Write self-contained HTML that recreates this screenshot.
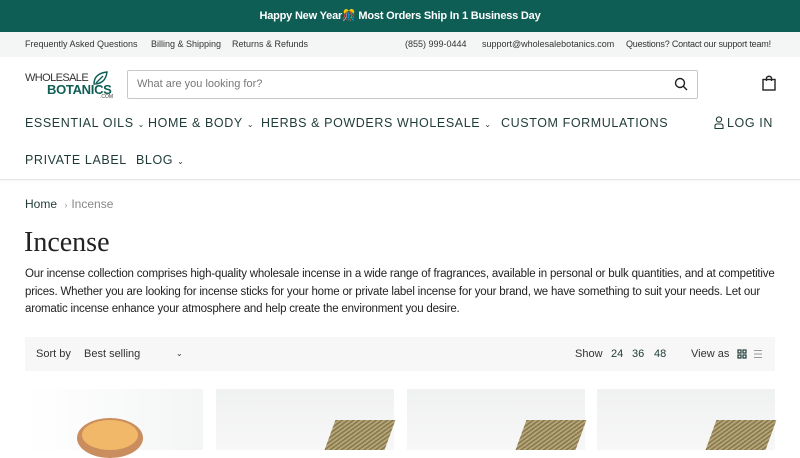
<!DOCTYPE html>
<html><head><meta charset="utf-8"><style>
*{margin:0;padding:0;box-sizing:border-box}
body{width:800px;height:450px;overflow:hidden;background:#fff;font-family:"Liberation Sans",sans-serif;color:#222;position:relative}
.a{position:absolute;white-space:nowrap}
.top{left:0;top:0;width:800px;height:32px;background:#0f5e55;color:#fff;font-weight:bold;font-size:11px;text-align:center;line-height:32px;letter-spacing:-0.2px}
.sub{left:0;top:32px;width:800px;height:25px;background:#f3f6f5;font-size:9px;color:#333;line-height:25px}
.nav{font-size:12.5px;letter-spacing:0.6px;color:#1f3b38}
.car{font-size:8px;margin-left:4px}
.desc{position:absolute;left:25px;width:760px;font-size:11.5px;color:#222;letter-spacing:-0.2px;white-space:nowrap}
.card{position:absolute;top:389px;width:178px;height:61px;background:linear-gradient(180deg,#f0f1f1,#f7f7f7)}
</style></head><body>
<div class="a top">Happy New Year🎊 Most Orders Ship In 1 Business Day</div>
<div class="a sub">
<span class="a" style="left:25px">Frequently Asked Questions</span>
<span class="a" style="left:151px">Billing &amp; Shipping</span>
<span class="a" style="left:232px">Returns &amp; Refunds</span>
<span class="a" style="left:405px">(855) 999-0444</span>
<span class="a" style="left:482px">support@wholesalebotanics.com</span>
<span class="a" style="left:626px;letter-spacing:-0.2px">Questions? Contact our support team!</span>
</div>
<div class="a" style="left:25px;top:72px;font-size:11px;color:#333;letter-spacing:-0.6px">WHOLESALE</div>
<div class="a" style="left:47px;top:82px;font-size:13px;font-weight:bold;color:#0f5e55;letter-spacing:-0.3px">BOTANICS</div>
<div class="a" style="left:100px;top:94px;font-size:5px;color:#333">.COM</div>
<svg class="a" style="left:92px;top:71px" width="16" height="14" viewBox="0 0 16 14"><path d="M2 13C2 6 6 2 15 1C14 9 10 13 2 13ZM4 12L11 5" fill="none" stroke="#0f5e55" stroke-width="1.4"/></svg>
<div class="a" style="left:127px;top:70px;width:571px;height:29px;border:1px solid #c8c8c8;border-radius:2px"></div>
<div class="a" style="left:137px;top:78px;font-size:11px;color:#777">What are you looking for?</div>
<svg class="a" style="left:674px;top:77px" width="14" height="14" viewBox="0 0 14 14"><circle cx="6" cy="6" r="4.5" fill="none" stroke="#222" stroke-width="1.4"/><path d="M9.3 9.3L13 13" stroke="#222" stroke-width="1.4"/></svg>
<svg class="a" style="left:762px;top:75px" width="14" height="16" viewBox="0 0 14 16"><rect x="1" y="4.5" width="12" height="10.5" fill="none" stroke="#222" stroke-width="1.4"/><path d="M4.5 6V2.5Q7 0 9.5 2.5V6" fill="none" stroke="#222" stroke-width="1.3"/></svg>
<div class="a nav" style="left:25px;top:116px">ESSENTIAL OILS<span class="car">⌄</span></div>
<div class="a nav" style="left:148px;top:116px">HOME &amp; BODY<span class="car">⌄</span></div>
<div class="a nav" style="left:261px;top:116px">HERBS &amp; POWDERS</div>
<div class="a nav" style="left:397px;top:116px">WHOLESALE<span class="car">⌄</span></div>
<div class="a nav" style="left:501px;top:116px">CUSTOM FORMULATIONS</div>
<svg class="a" style="left:714px;top:116px" width="10" height="13" viewBox="0 0 10 13"><circle cx="5" cy="3.5" r="2.6" fill="none" stroke="#1f3b38" stroke-width="1.1"/><path d="M1 12.5V10Q1 8 3 8H7Q9 8 9 10V12.5Z" fill="none" stroke="#1f3b38" stroke-width="1.1"/></svg>
<div class="a nav" style="left:727px;top:116px">LOG IN</div>
<div class="a nav" style="left:25px;top:153px">PRIVATE LABEL</div>
<div class="a nav" style="left:136px;top:153px">BLOG<span class="car">⌄</span></div>
<div class="a" style="left:0;top:179px;width:800px;height:1px;background:#e6e6e6;box-shadow:0 1px 2px #eee"></div>
<div class="a" style="left:25px;top:197px;font-size:12px;color:#1f3b38">Home <span style="color:#999;font-size:9px;margin:0 4px">›</span><span style="color:#888">Incense</span></div>
<div class="a" style="left:24px;top:227px;font-family:'Liberation Serif',serif;font-size:28px;color:#222">Incense</div>
<div class="desc" style="top:268px">Our incense collection comprises high-quality wholesale incense in a wide range of fragrances, available in personal or bulk quantities, and at competitive</div>
<div class="desc" style="top:285.5px">prices. Whether you are looking for incense sticks for your home or private label incense for your brand, we have something to suit your needs. Let our</div>
<div class="desc" style="top:303px">aromatic incense enhance your atmosphere and help create the environment you desire.</div>
<div class="a" style="left:25px;top:337px;width:750px;height:34px;background:#f7f7f7;font-size:11px;line-height:34px;color:#333">
<span class="a" style="left:11px">Sort by</span>
<span class="a" style="left:59px">Best selling</span>
<span class="a" style="left:151px;font-size:8px">⌄</span>
<span class="a" style="left:550px">Show</span>
<span class="a" style="left:586px;color:#1f3b38">24</span>
<span class="a" style="left:607px;color:#1f3b38">36</span>
<span class="a" style="left:629px;color:#1f3b38">48</span>
<span class="a" style="left:666px">View as</span>
<svg class="a" style="left:712px;top:12px" width="10" height="10" viewBox="0 0 10 10"><g fill="none" stroke="#1f3b38" stroke-width="1.2"><rect x="1" y="1" width="3" height="3"/><rect x="6" y="1" width="3" height="3"/><rect x="1" y="6" width="3" height="3"/><rect x="6" y="6" width="3" height="3"/></g></svg>
<svg class="a" style="left:728px;top:12px" width="10" height="10" viewBox="0 0 10 10"><path d="M1 1.5H9M1 5H9M1 8.5H9" stroke="#999" stroke-width="1"/></svg>
</div>
<div class="card" style="left:25px;background:linear-gradient(90deg,#fff,#f4f5f5)"></div>
<div class="a" style="left:77px;top:418px;width:66px;height:40px;border-radius:50%;background:#c98d5e"></div>
<div class="a" style="left:82px;top:420px;width:56px;height:30px;border-radius:50%;background:#f1b86a"></div>
<div class="card" style="left:216px"></div>
<div class="card" style="left:407px"></div>
<div class="card" style="left:597px"></div>
<div class="a" style="left:330px;top:420px;width:60px;height:30px;background:repeating-linear-gradient(135deg,#8a7a4e 0 2px,#b5a77a 2px 4px);transform:skewX(-20deg)"></div>
<div class="a" style="left:521px;top:420px;width:60px;height:30px;background:repeating-linear-gradient(135deg,#8a7a4e 0 2px,#b5a77a 2px 4px);transform:skewX(-20deg)"></div>
<div class="a" style="left:711px;top:420px;width:60px;height:30px;background:repeating-linear-gradient(135deg,#8a7a4e 0 2px,#b5a77a 2px 4px);transform:skewX(-20deg)"></div>
</body></html>
